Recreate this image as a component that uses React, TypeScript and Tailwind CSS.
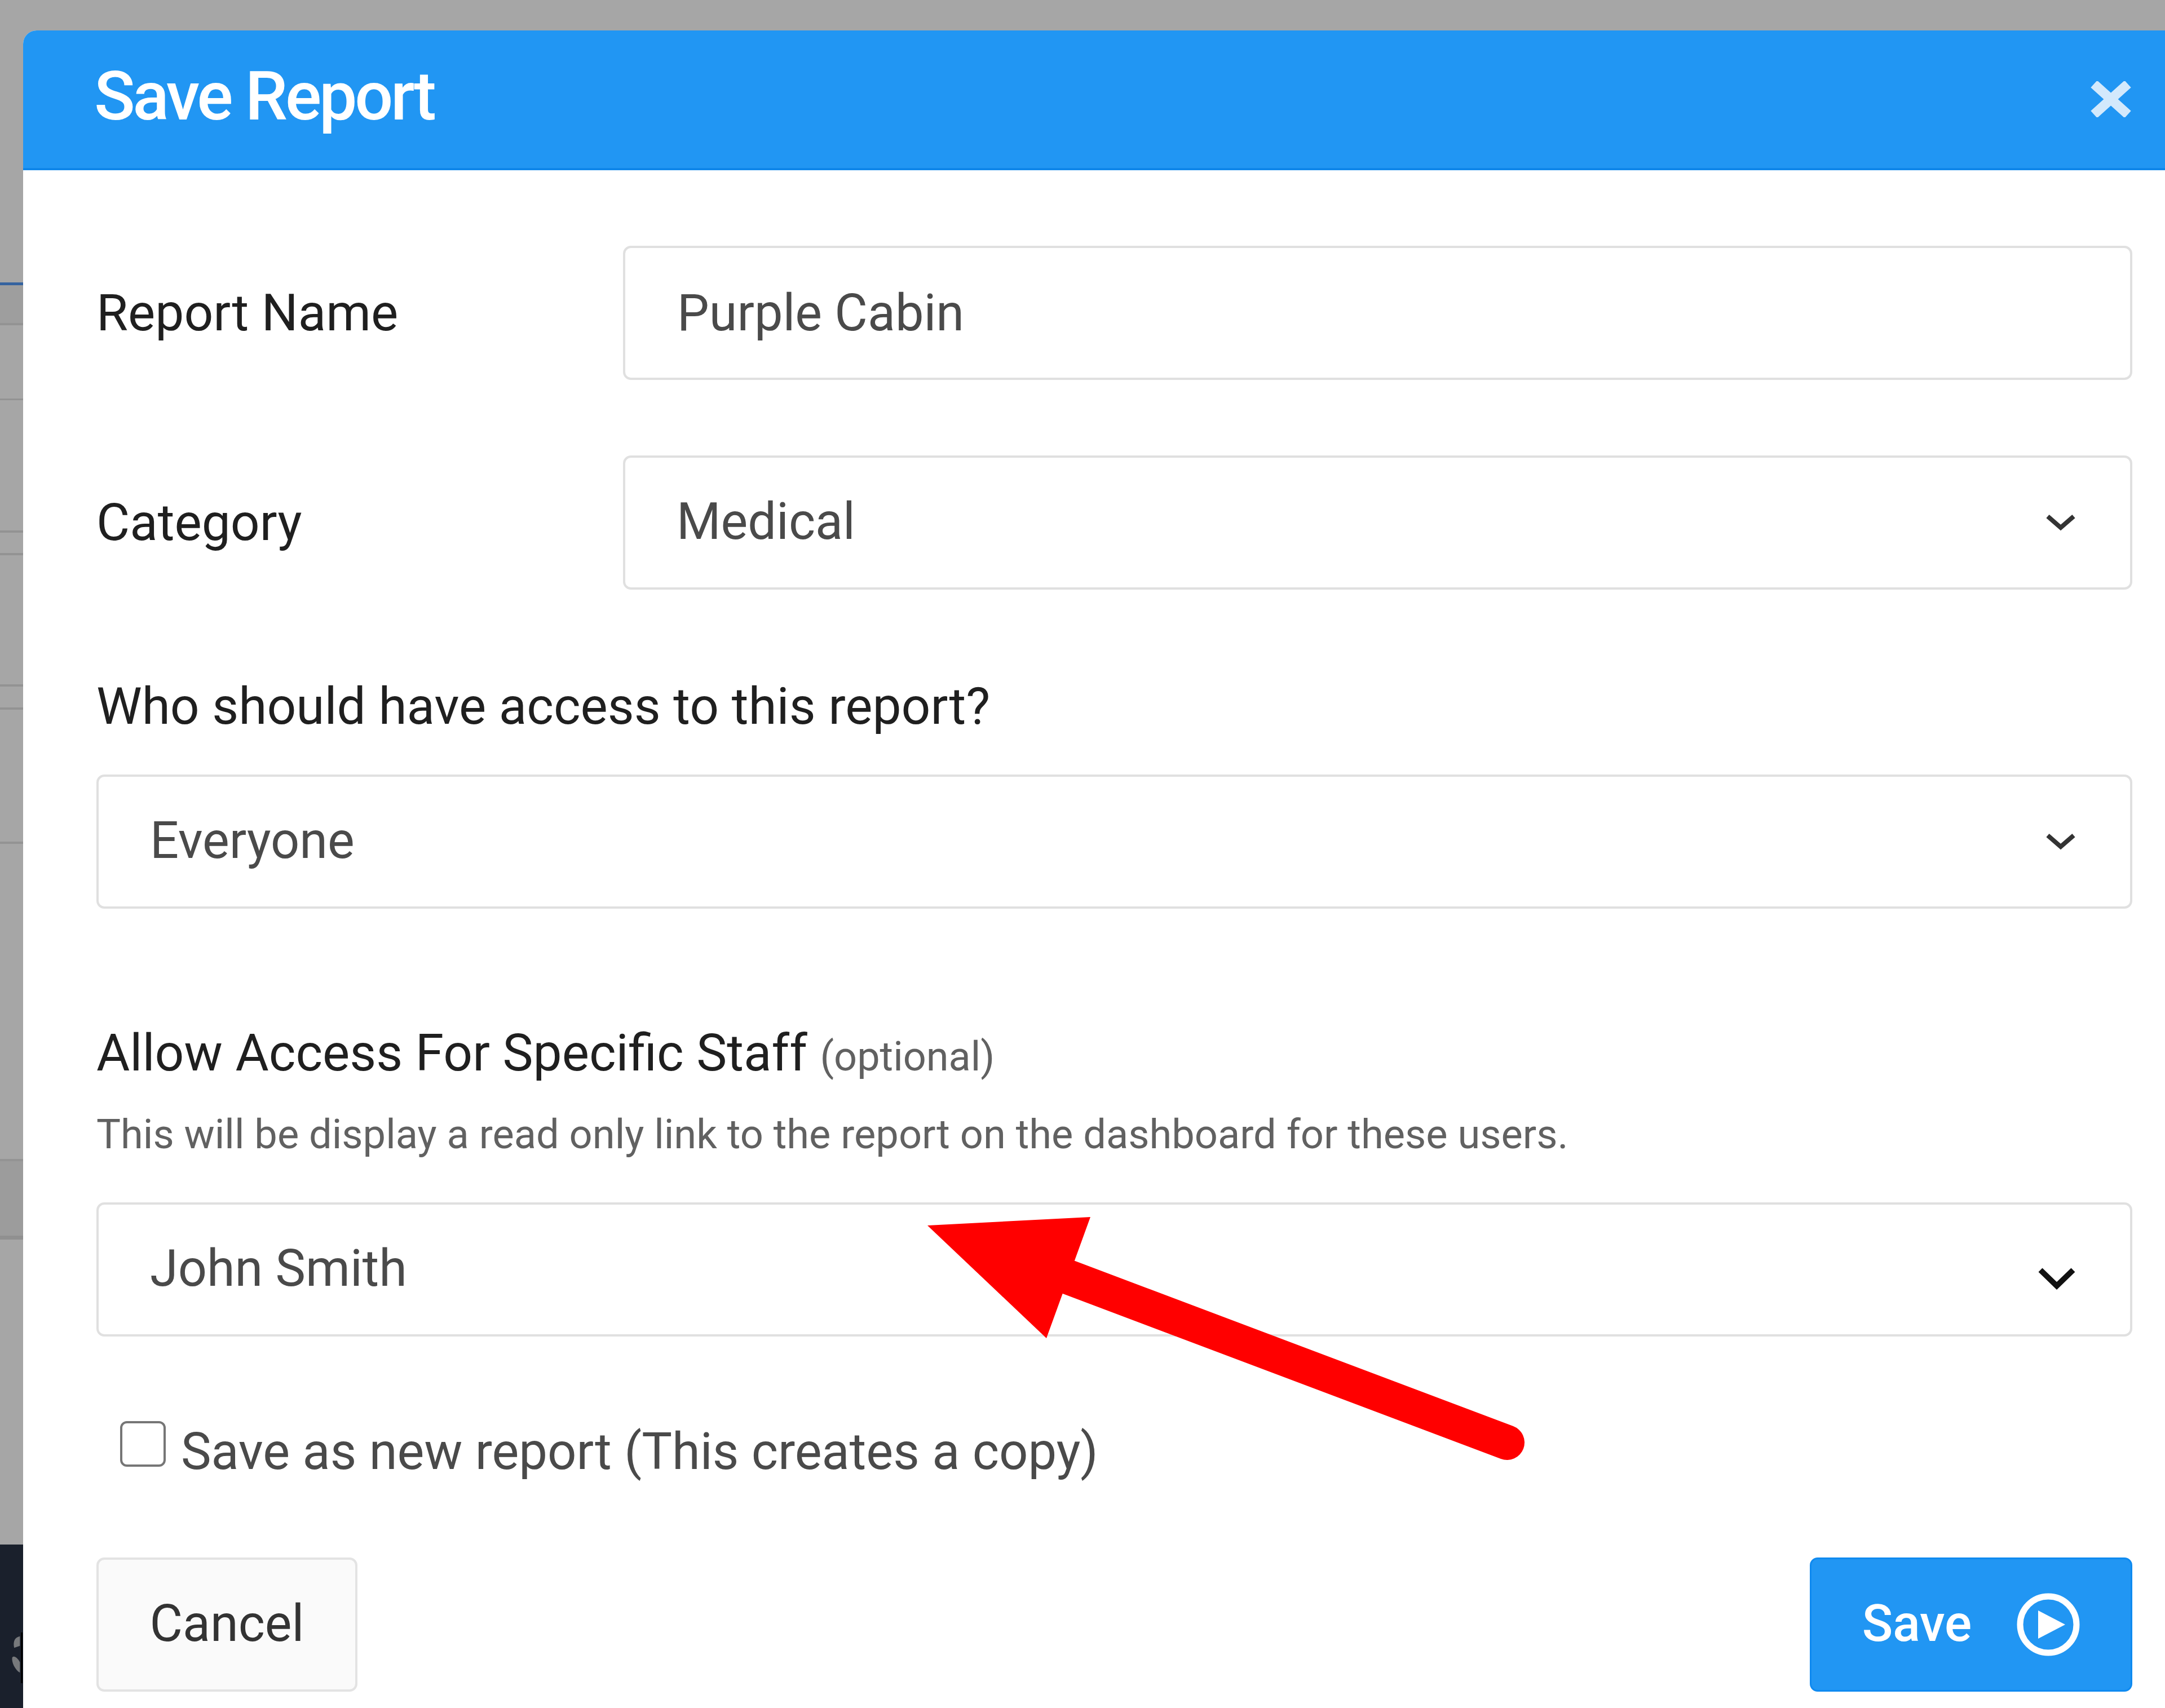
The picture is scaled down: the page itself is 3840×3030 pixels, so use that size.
import React from 'react'

function Chevron({ bold }: { bold?: boolean }) {
  if (bold) {
    return (
      <svg className="mt-[32px] h-[40px] w-[66px] shrink-0" viewBox="0 0 66 40" fill="none">
        <path d="M4 5 L33 33 L62 5" stroke="#111" strokeWidth="10" />
      </svg>
    )
  }
  return (
    <svg className="h-[30px] w-[52px] shrink-0" viewBox="0 0 52 30" fill="none">
      <path d="M3 4 L26 24 L49 4" stroke="#333" strokeWidth="8" />
    </svg>
  )
}

function SelectBox({ value, bold }: { value: string; bold?: boolean }) {
  return (
    <div className="flex h-[238px] flex-1 items-center justify-between rounded-[14px] border-[4px] border-[#e0e0e0] bg-white pl-[91px] pr-[97px] text-[90px] text-[#4a4a4a]">
      <span className="-mt-[4px]">{value}</span>
      <Chevron bold={bold} />
    </div>
  )
}

function LeftStrip() {
  return (
    <div className="flex h-[3030px] w-[41px] shrink-0 flex-col bg-[#a6a6a6]">
      <div className="h-[501px] shrink-0" />
      <div className="h-[5px] shrink-0 bg-[#35639f]" />
      <div className="h-[67px] shrink-0 bg-[#9e9e9e]" />
      <div className="h-[4px] shrink-0 bg-[#939393]" />
      <div className="h-[130px] shrink-0" />
      <div className="h-[3px] shrink-0 bg-[#939393]" />
      <div className="h-[231px] shrink-0" />
      <div className="h-[4px] shrink-0 bg-[#939393]" />
      <div className="h-[36px] shrink-0" />
      <div className="h-[4px] shrink-0 bg-[#939393]" />
      <div className="h-[229px] shrink-0" />
      <div className="h-[4px] shrink-0 bg-[#939393]" />
      <div className="h-[37px] shrink-0" />
      <div className="h-[4px] shrink-0 bg-[#939393]" />
      <div className="h-[234px] shrink-0" />
      <div className="h-[4px] shrink-0 bg-[#939393]" />
      <div className="h-[559px] shrink-0" />
      <div className="h-[4px] shrink-0 bg-[#939393]" />
      <div className="h-[132px] shrink-0 bg-[#9c9c9c]" />
      <div className="h-[7px] shrink-0 bg-[#909090]" />
      <div className="h-[541px] shrink-0" />
      <div className="flex flex-1 justify-end bg-[#1a202c] pr-[1px]">
        <svg className="mt-[156px] h-[90px] w-[20px] border-r-[3px] border-black" viewBox="0 0 20 90" fill="#77797c">
          <path d="M18 0 C8 2 3 10 6 24 L18 20 Z" />
          <path d="M2 44 C6 40 12 44 18 54 L18 76 C8 70 0 54 2 44 Z" />
        </svg>
      </div>
    </div>
  )
}

export default function App() {
  return (
    <div className="relative flex h-[3030px] w-[3840px] overflow-hidden bg-[#a6a6a6] font-['Roboto',sans-serif]">
      <LeftStrip />

      <div className="flex-1 pt-[54px]">
        <div className="h-full overflow-hidden rounded-tl-[24px] bg-white">
          <div className="flex h-[248px] items-center justify-between border-b-[4px] border-[#0f86ea] bg-[#2196f3] pl-[126px] pr-[60px]">
            <h1 className="-mt-[10px] text-[120px] font-medium leading-none tracking-[-4.3px] text-white">Save Report</h1>
            <svg className="h-[64px] w-[72px]" viewBox="0 0 72 64" fill="none">
              <path d="M6 5 L66 59 M66 5 L6 59" stroke="#d3e9fc" strokeWidth="17" />
            </svg>
          </div>

          <div className="pl-[130px] pr-[58px] pt-[134px]">
            <div className="flex items-center">
              <label className="w-[934px] shrink-0 text-[91px] leading-none text-[#1f1f1f]">Report Name</label>
              <input
                readOnly
                value="Purple Cabin"
                className="h-[238px] flex-1 rounded-[14px] border-[4px] border-[#e0e0e0] bg-white pl-[92px] text-[90px] text-[#4a4a4a] outline-none"
              />
            </div>

            <div className="mt-[134px] flex items-center">
              <label className="w-[934px] shrink-0 text-[91px] leading-none text-[#1f1f1f]">Category</label>
              <SelectBox value="Medical" />
            </div>

            <p className="mb-[61px] mt-[147px] text-[91px] leading-[120px] text-[#1f1f1f]">Who should have access to this report?</p>
            <div className="flex">
              <SelectBox value="Everyone" />
            </div>

            <p className="mt-[196px] h-[120px] text-[91px] leading-[120px] text-[#1f1f1f]">
              Allow Access For Specific Staff <span className="text-[72px] leading-none text-[#616161]">(optional)</span>
            </p>
            <p className="mt-[35px] text-[72.2px] leading-[100px] text-[#616161]">
              This will be display a read only link to the report on the dashboard for these users.
            </p>
            <div className="mt-[70px] flex">
              <SelectBox value="John Smith" bold />
            </div>

            <div className="mt-[130px] flex h-[140px] items-start pl-[42px]">
              <input
                type="checkbox"
                readOnly
                className="mt-[20px] h-[81px] w-[81px] shrink-0 appearance-none rounded-[12px] border-[4px] border-[#767676] bg-white"
              />
              <span className="ml-[27px] text-[90.3px] leading-[148px] text-[#4a4a4a]">Save as new report (This creates a copy)</span>
            </div>

            <div className="mt-[122px] flex justify-between">
              <button className="h-[238px] w-[463px] rounded-[14px] border-[4px] border-[#e3e3e3] bg-[#fafafa] pb-[4px] text-[90px] text-[#333]">
                Cancel
              </button>
              <button className="flex h-[238px] w-[572px] items-center justify-center gap-[80px] rounded-[14px] border-[3px] border-[#0f8af0] bg-[#2196f3] text-[90px] font-medium text-white">
                <span className="-mt-[4px]">Save</span>
                <svg className="h-[112px] w-[112px]" viewBox="0 0 112 112" fill="none">
                  <circle cx="56" cy="56" r="50" stroke="#fff" strokeWidth="11" />
                  <path d="M38 31 L86 56 L38 81 Z" fill="#fff" />
                </svg>
              </button>
            </div>
          </div>
        </div>
      </div>

      {/* red annotation arrow drawn on top of the screenshot */}
      <svg className="pointer-events-none absolute left-0 top-0 h-[3030px] w-[3840px]" viewBox="0 0 3840 3030" fill="none">
        <path d="M1645 2174 L1934 2159 L1856 2374 Z" fill="#ff0000" />
        <path d="M1896 2266 L2673 2559" stroke="#ff0000" strokeWidth="62" strokeLinecap="round" />
      </svg>
    </div>
  )
}
